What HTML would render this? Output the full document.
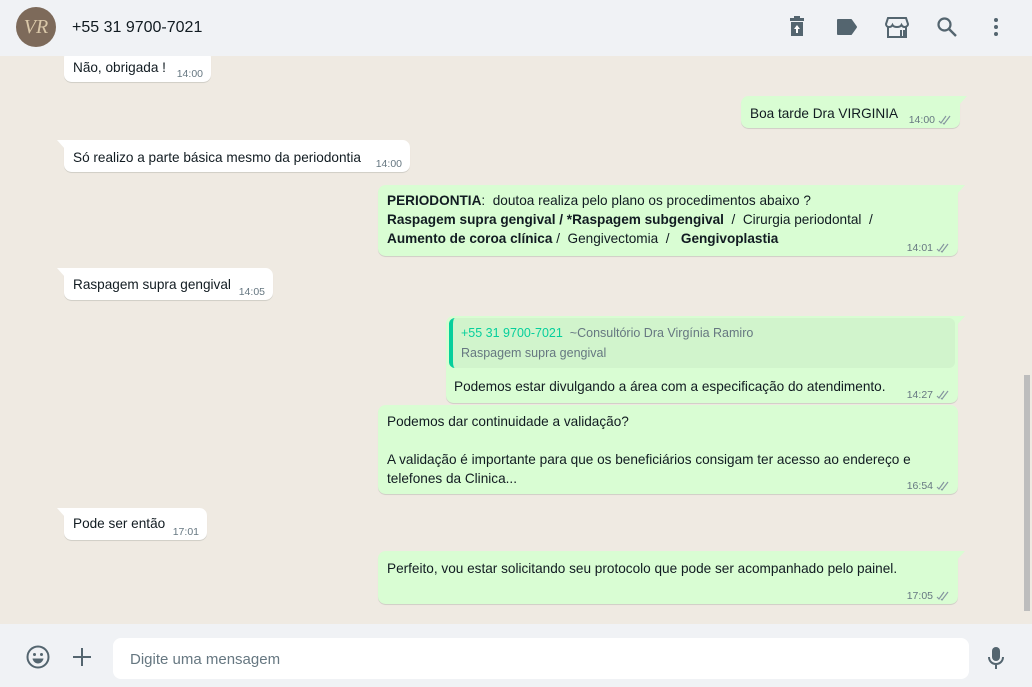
<!DOCTYPE html>
<html><head><meta charset="utf-8"><style>
*{margin:0;padding:0;box-sizing:border-box}
body{width:1032px;height:687px;overflow:hidden;font-family:"Liberation Sans",sans-serif;background:#efeae2;position:relative;color:#111b21}
.hdr{position:absolute;left:0;top:0;width:1032px;height:56px;background:#f0f2f5;z-index:5}
.av{position:absolute;left:16px;top:7px;width:40px;height:40px;border-radius:50%;background:#7d6a5a;color:#d9c7a8;font-family:"Liberation Serif",serif;font-style:italic;font-size:20px;text-align:center;line-height:40px}
.name{position:absolute;left:72px;top:18px;font-size:16px;color:#111b21}
.ic{position:absolute;top:16px}
.b{position:absolute;border-radius:7.5px;font-size:13.6px;line-height:19px;box-shadow:0 1px 0.5px rgba(11,20,26,.13);padding:7px 9px 0 9px}
.in{background:#fff}
.out{background:#d9fdd3}
.in.tl{border-top-left-radius:0}
.out.tr{border-top-right-radius:0}
.in.tl:before{content:"";position:absolute;left:-7px;top:0;border-top:9px solid #fff;border-left:8px solid transparent}
.out.tr:before{content:"";position:absolute;right:-7px;top:0;border-top:9px solid #d9fdd3;border-right:8px solid transparent}
.t{position:absolute;right:8px;bottom:1px;font-size:10.5px;color:#667781;line-height:14px;display:flex;align-items:center}
.t svg{margin-left:3px}
.ft{position:absolute;left:0;top:624px;width:1032px;height:63px;background:#f0f2f5}
.inp{position:absolute;left:113px;top:14px;width:856px;height:41px;background:#fff;border-radius:8px;font-size:15px;color:#667781;padding:13px 0 0 17px}
.sb{position:absolute;left:1024px;top:375px;width:6px;height:236px;background:#bdbdbd}
b{font-weight:bold}
</style></head><body>
<div class="hdr">
<div class="av">VR</div>
<div class="name" style="top:19px">+55 31 9700-7021</div>
<svg class="ic" style="left:787px" width="20" height="22" viewBox="0 0 20 22"><rect x="3" y="2" width="14" height="3" fill="#54656f"/><rect x="7" y="0" width="6" height="3" fill="#54656f"/><path d="M4 6h12v14H4z" fill="#54656f"/><path d="M10 9l-3 4h2v4h2v-4h2z" fill="#fff"/></svg>
<svg class="ic" style="left:836px;top:18px" width="22" height="18" viewBox="0 0 22 18"><path d="M2 2h13l5 7-5 7H2z" fill="#54656f" stroke="#54656f" stroke-linejoin="round" stroke-width="2"/></svg>
<svg class="ic" style="left:885px" width="24" height="22" viewBox="0 0 24 22"><path d="M3 2h18l2 6c0 2-2 3-3.5 3S17 10 16.5 9c-.5 1-2 2-4.5 2S8 10 7.5 9C7 10 5.5 11 4 11S1 10 1 8z M3 11v10h18V11" fill="none" stroke="#54656f" stroke-width="2"/><path d="M16 14v7M19 14v7" stroke="#54656f" stroke-width="2"/></svg>
<svg class="ic" style="left:936px" width="22" height="22" viewBox="0 0 22 22"><circle cx="8.5" cy="8.5" r="6" fill="none" stroke="#54656f" stroke-width="2.2"/><path d="M13 13l7 7" stroke="#54656f" stroke-width="2.4"/></svg>
<svg class="ic" style="left:992px;top:17px" width="8" height="20" viewBox="0 0 8 20"><circle cx="4" cy="3" r="2" fill="#54656f"/><circle cx="4" cy="10" r="2" fill="#54656f"/><circle cx="4" cy="17" r="2" fill="#54656f"/></svg>
</div>

<div class="b in" style="left:64px;top:50px;width:147px;height:32px;padding-top:8px">Não, obrigada !<span class="t">14:00</span></div>
<div class="b out tr" style="left:741px;top:96px;width:219px;height:32px;padding-top:8px">Boa tarde Dra VIRGINIA<span class="t">14:00<svg width="14" height="10" viewBox="0 0 14 10"><path d="M1 6l2 2 5-7M5 8l1 1 6-8" fill="none" stroke="#8696a0" stroke-width="1.2"/></svg></span></div>
<div class="b in tl" style="left:64px;top:140px;width:346px;height:32px;padding-top:8px">Só realizo a parte básica mesmo da periodontia<span class="t">14:00</span></div>
<div class="b out tr" style="left:378px;top:185px;width:580px;height:71px;padding-top:6px"><b>PERIODONTIA</b>:&nbsp; doutoa realiza pelo plano os procedimentos abaixo ?<br><b>Raspagem supra gengival / *Raspagem subgengival</b>&nbsp; /&nbsp; Cirurgia periodontal&nbsp; /<br><b>Aumento de coroa clínica</b> /&nbsp; Gengivectomia&nbsp; /&nbsp;&nbsp; <b>Gengivoplastia</b><span class="t">14:01<svg width="14" height="10" viewBox="0 0 14 10"><path d="M1 6l2 2 5-7M5 8l1 1 6-8" fill="none" stroke="#8696a0" stroke-width="1.2"/></svg></span></div>
<div class="b in tl" style="left:64px;top:268px;width:209px;height:32px;padding-top:7px">Raspagem supra gengival<span class="t">14:05</span></div>
<div class="b out tr" style="left:446px;top:316px;width:512px;height:87px;padding:0">
<div style="position:absolute;left:3px;top:2px;width:506px;height:50px;background:#d1f4cc;border-radius:6px;border-left:4px solid #06cf9c;padding:5px 0 0 8px;font-size:12.5px;color:#667781;line-height:20px"><span style="color:#06cf9c">+55 31 9700-7021</span>&nbsp;&nbsp;~Consultório Dra Virgínia Ramiro<br>Raspagem supra gengival</div>
<div style="position:absolute;left:8px;top:61px">Podemos estar divulgando a área com a especificação do atendimento.</div>
<span class="t">14:27<svg width="14" height="10" viewBox="0 0 14 10"><path d="M1 6l2 2 5-7M5 8l1 1 6-8" fill="none" stroke="#8696a0" stroke-width="1.2"/></svg></span></div>
<div class="b out" style="left:378px;top:405px;width:580px;height:89px;padding-top:7px">Podemos dar continuidade a validação?<br><br>A validação é importante para que os beneficiários consigam ter acesso ao endereço e<br>telefones da Clinica...<span class="t">16:54<svg width="14" height="10" viewBox="0 0 14 10"><path d="M1 6l2 2 5-7M5 8l1 1 6-8" fill="none" stroke="#8696a0" stroke-width="1.2"/></svg></span></div>
<div class="b in tl" style="left:64px;top:508px;width:143px;height:32px;padding-top:6px">Pode ser então<span class="t">17:01</span></div>
<div class="b out tr" style="left:378px;top:551px;width:580px;height:53px;padding-top:8px">Perfeito, vou estar solicitando seu protocolo que pode ser acompanhado pelo painel.<span class="t">17:05<svg width="14" height="10" viewBox="0 0 14 10"><path d="M1 6l2 2 5-7M5 8l1 1 6-8" fill="none" stroke="#8696a0" stroke-width="1.2"/></svg></span></div>
<div class="sb"></div>

<div class="ft">
<svg style="position:absolute;left:26px;top:21px" width="24" height="24" viewBox="0 0 24 24"><circle cx="12" cy="12" r="10.5" fill="none" stroke="#54656f" stroke-width="2"/><circle cx="8.5" cy="9.5" r="1.5" fill="#54656f"/><circle cx="15.5" cy="9.5" r="1.5" fill="#54656f"/><path d="M6.5 13.5h11c-.5 3-3 5-5.5 5s-5-2-5.5-5z" fill="#54656f"/></svg>
<svg style="position:absolute;left:72px;top:23px" width="20" height="20" viewBox="0 0 20 20"><path d="M10 1v18M1 10h18" stroke="#54656f" stroke-width="2"/></svg>
<div class="inp">Digite uma mensagem</div>
<svg style="position:absolute;left:988px;top:22px" width="16" height="24" viewBox="0 0 16 24"><rect x="4" y="1" width="8" height="14" rx="4" fill="#54656f"/><path d="M1 11c0 4 3 7 7 7s7-3 7-7M8 18v5" fill="none" stroke="#54656f" stroke-width="2"/></svg>
</div>
</body></html>
